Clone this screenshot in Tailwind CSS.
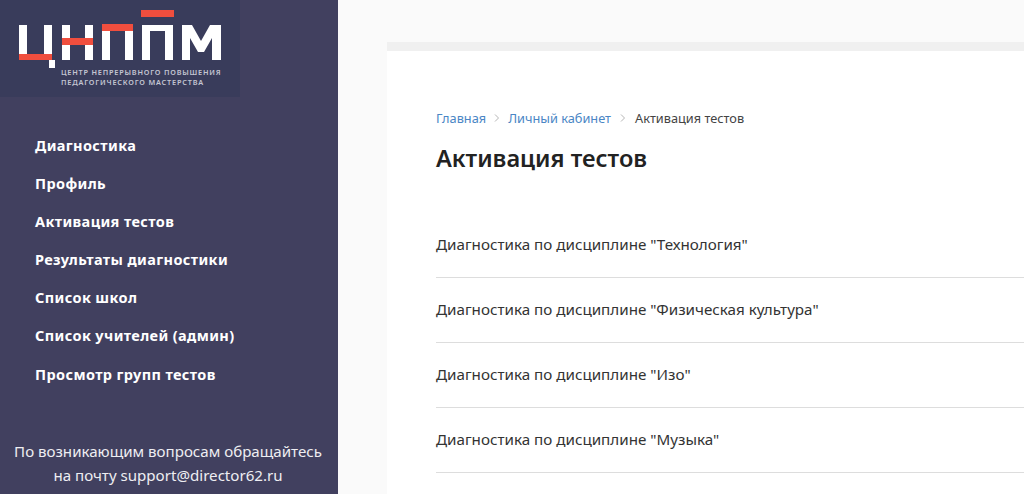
<!DOCTYPE html>
<html lang="ru">
<head>
<meta charset="utf-8">
<script src="https://cdn.jsdelivr.net/npm/@tailwindcss/browser@4"></script>
</head>
<body class="h-[494px] w-[1024px] overflow-hidden bg-[#fafafa] font-['Noto_Sans',sans-serif]">
<div class="flex h-[494px]">
  <aside class="flex h-[494px] w-[338px] shrink-0 flex-col bg-[#41405f]">
    <div class="relative h-[97px] w-[240px] bg-[#393c5b]">
      <svg class="block" width="240" height="97" viewBox="0 0 240 97" aria-hidden="true">
        <g fill="#ffffff">
          <rect x="19" y="25" width="8" height="29"/>
          <rect x="44" y="25" width="8" height="29"/>
          <rect x="49" y="60" width="6" height="8"/>
          <rect x="62" y="25" width="8" height="35"/>
          <rect x="85" y="25" width="8" height="35"/>
          <rect x="102" y="31" width="8" height="29"/>
          <rect x="125" y="31" width="8" height="29"/>
          <path d="M142 60V25H173V60H165V31H150V60Z"/>
          <path d="M182 60V25H192L201 41L210 25H221V60H212V38L204 52H198L190 38V60Z"/>
        </g>
        <g fill="#f04e3e">
          <rect x="19" y="54" width="33" height="6"/>
          <rect x="62" y="38" width="31" height="7"/>
          <rect x="102" y="24" width="31" height="7"/>
          <rect x="141" y="10" width="33" height="7"/>
        </g>
      </svg>
      <p class="absolute left-[61px] top-[68px] text-[7.3px] leading-[9.5px] font-semibold tracking-[0.8px] whitespace-nowrap text-[#c3c5d2]">ЦЕНТР НЕПРЕРЫВНОГО ПОВЫШЕНИЯ<br>ПЕДАГОГИЧЕСКОГО МАСТЕРСТВА</p>
    </div>
    <nav class="mt-[38px] flex flex-col gap-[18px] pl-[35px] text-[14.5px] leading-[20.1px] font-bold tracking-[0.38px] text-white">
      <a>Диагностика</a>
      <a>Профиль</a>
      <a>Активация тестов</a>
      <a>Результаты диагностики</a>
      <a>Список школ</a>
      <a>Список учителей (админ)</a>
      <a>Просмотр групп тестов</a>
    </nav>
    <p class="mt-[55px] w-[336px] text-center text-[15.1px] leading-[24px] text-[#eeeef2]">По возникающим вопросам обращайтесь<br>на почту support@director62.ru</p>
  </aside>
  <main class="mt-[42px] ml-[49px] flex-1 border-t-[9px] border-[#f0f0f0] bg-white pl-[49px]">
    <div class="mt-[57px] flex items-center text-[12.75px] leading-[20px]">
      <a class="text-[#4a86c5]">Главная</a>
      <svg class="mx-[8px]" width="6" height="8" viewBox="0 0 6 8" fill="none" stroke="#b5b5b5" aria-hidden="true"><path d="M1 0.5L4.5 4L1 7.5"/></svg>
      <a class="text-[#4a86c5]">Личный кабинет</a>
      <svg class="mx-[9px]" width="6" height="8" viewBox="0 0 6 8" fill="none" stroke="#b5b5b5" aria-hidden="true"><path d="M1 0.5L4.5 4L1 7.5"/></svg>
      <span class="text-[#444444]">Активация тестов</span>
    </div>
    <h1 class="mt-[15px] text-[23.6px] leading-[30px] font-semibold text-[#222222]">Активация тестов</h1>
    <ul class="mt-[40px] text-[15.2px] leading-[20px] text-[#333333]">
      <li class="flex h-[65px] items-center border-b border-[#dddddd] pb-[2px]">Диагностика по дисциплине "Технология"</li>
      <li class="flex h-[65px] items-center border-b border-[#dddddd] pb-[2px]">Диагностика по дисциплине "Физическая культура"</li>
      <li class="flex h-[65px] items-center border-b border-[#dddddd] pb-[2px]">Диагностика по дисциплине "Изо"</li>
      <li class="flex h-[65px] items-center border-b border-[#dddddd] pb-[2px]">Диагностика по дисциплине "Музыка"</li>
    </ul>
  </main>
</div>
</body>
</html>
